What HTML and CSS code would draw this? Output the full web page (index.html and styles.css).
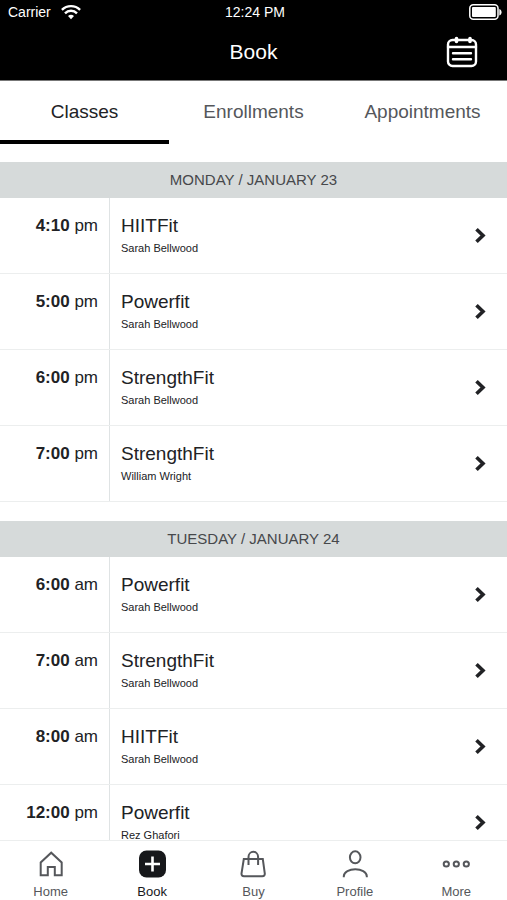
FILE: index.html
```html
<!DOCTYPE html>
<html lang="en">
<head>
<meta charset="utf-8">
<meta name="viewport" content="width=device-width, initial-scale=1">
<title>Book</title>
<link rel="stylesheet" href="styles.css">
</head>
<body>
<svg class="sprite" aria-hidden="true">
  <symbol id="chevron" viewBox="0 0 12 18"><path d="M2.500 2.200 9 8.500l-6.500 6.300" fill="none" stroke="currentColor" stroke-width="3.600"/></symbol>
</svg>

<header class="top">
  <div class="status">
    <span class="carrier">Carrier
      <svg width="20" height="16" viewBox="0 0 20 16" fill="none" stroke="currentColor" stroke-width="2.400" aria-hidden="true"><path d="M.9 5.800a13 13 0 0 1 18.200 0M4 9.300a8.500 8.500 0 0 1 12 0"/><path d="M10 15.300 7 12.100a4.300 4.300 0 0 1 6 0z" fill="currentColor" stroke="none"/></svg>
    </span>
    <span>12:24 PM</span>
    <span class="battery">
      <svg width="33" height="16" viewBox="0 0 33 16" aria-hidden="true"><rect x=".8" y=".8" width="28.200" height="14.400" rx="3.500" fill="none" stroke="currentColor" stroke-width="1.500"/><rect x="3" y="3" width="23.800" height="10" rx="1" fill="currentColor"/><path d="M30.300 5c3 .8 3 5.800 0 6.600z" fill="currentColor"/></svg>
    </span>
  </div>
  <div class="titlebar">
    <h1>Book</h1>
    <button class="calendar" type="button" aria-label="Calendar">
      <svg width="32" height="32" viewBox="0 0 32 32" fill="none" stroke="currentColor" stroke-width="2.400" stroke-linecap="round" aria-hidden="true"><rect x="2" y="4" width="28" height="26" rx="4.500"/><path d="M2 11h28M7 17.200h18M7 23.300h18"/><path d="M10.500 2.500v3M24 2.500v3" stroke-width="3.600"/></svg>
    </button>
  </div>
</header>

<nav class="tabs" aria-label="Booking types">
  <a href="#classes" class="tab active" aria-current="page">Classes</a>
  <a href="#enrollments" class="tab">Enrollments</a>
  <a href="#appointments" class="tab">Appointments</a>
</nav>

<main class="schedule" id="classes">
  <section class="day">
    <h2>MONDAY / JANUARY 23</h2>
    <a class="row" href="#c1"><span class="time"><b>4:10</b> pm</span><span class="info"><span class="name">HIITFit</span><span class="coach">Sarah Bellwood</span></span><svg class="chevron" aria-hidden="true"><use href="#chevron"/></svg></a>
    <a class="row" href="#c2"><span class="time"><b>5:00</b> pm</span><span class="info"><span class="name">Powerfit</span><span class="coach">Sarah Bellwood</span></span><svg class="chevron" aria-hidden="true"><use href="#chevron"/></svg></a>
    <a class="row" href="#c3"><span class="time"><b>6:00</b> pm</span><span class="info"><span class="name">StrengthFit</span><span class="coach">Sarah Bellwood</span></span><svg class="chevron" aria-hidden="true"><use href="#chevron"/></svg></a>
    <a class="row" href="#c4"><span class="time"><b>7:00</b> pm</span><span class="info"><span class="name">StrengthFit</span><span class="coach">William Wright</span></span><svg class="chevron" aria-hidden="true"><use href="#chevron"/></svg></a>
  </section>
  <section class="day">
    <h2>TUESDAY / JANUARY 24</h2>
    <a class="row" href="#c5"><span class="time"><b>6:00</b> am</span><span class="info"><span class="name">Powerfit</span><span class="coach">Sarah Bellwood</span></span><svg class="chevron" aria-hidden="true"><use href="#chevron"/></svg></a>
    <a class="row" href="#c6"><span class="time"><b>7:00</b> am</span><span class="info"><span class="name">StrengthFit</span><span class="coach">Sarah Bellwood</span></span><svg class="chevron" aria-hidden="true"><use href="#chevron"/></svg></a>
    <a class="row" href="#c7"><span class="time"><b>8:00</b> am</span><span class="info"><span class="name">HIITFit</span><span class="coach">Sarah Bellwood</span></span><svg class="chevron" aria-hidden="true"><use href="#chevron"/></svg></a>
    <a class="row" href="#c8"><span class="time"><b>12:00</b> pm</span><span class="info"><span class="name">Powerfit</span><span class="coach">Rez Ghafori</span></span><svg class="chevron" aria-hidden="true"><use href="#chevron"/></svg></a>
  </section>
</main>

<nav class="bottom" aria-label="Main">
  <a href="#home"><svg class="icon" viewBox="0 0 28 28" aria-hidden="true"><path d="M3.700 25.300V12.500L14.200 2.700l10.500 9.800v12.800h-6.900v-8.400h-7v8.400z"/></svg>Home</a>
  <a href="#book" class="active" aria-current="page"><svg class="icon" viewBox="0 0 28 28" aria-hidden="true"><rect x="1" y=".5" width="27" height="27" rx="7.500" fill="currentColor" stroke="none"/><path d="M14.500 6.500v15M7 14h15" stroke="#fff" stroke-width="2.600"/></svg>Book</a>
  <a href="#buy"><svg class="icon" viewBox="0 0 28 28" aria-hidden="true"><path d="M4.800 9h19l2 14.500q.2 2.700-2.500 2.700H5q-2.700 0-2.500-2.700z"/><path d="M9.500 15V7a4.800 5.200 0 0 1 9.600 0v8"/></svg>Buy</a>
  <a href="#profile"><svg class="icon" viewBox="0 0 28 28" aria-hidden="true"><ellipse cx="14.200" cy="7.300" rx="5.300" ry="6"/><path d="M2.800 27.300v-1c0-9.300 23-9.300 23 0v1"/></svg>Profile</a>
  <a href="#more"><svg class="icon" viewBox="0 0 28 28" aria-hidden="true"><circle cx="4.300" cy="14" r="2.600"/><circle cx="14.300" cy="14" r="2.600"/><circle cx="24.300" cy="14" r="2.600"/></svg>More</a>
</nav>
</body>
</html>
```
FILE: styles.css
```css
* {
  box-sizing: border-box;
}

body {
  display: flex;
  flex-direction: column;
  height: 100vh;
  margin: 0;
  background: #fff;
  color: #212225;
  font-family: "Liberation Sans", Arial, sans-serif;
}

a {
  color: inherit;
  text-decoration: none;
}

.sprite {
  display: none;
}

.top {
  background: #000;
  border-bottom: 1px solid #777;
  color: #fff;
}

.status {
  display: grid;
  grid-template-columns: 1fr auto 1fr;
  align-items: center;
  height: 24px;
  padding: 0 5px 0 8px;
  font-size: 14px;
}

.carrier {
  display: flex;
  align-items: center;
  gap: 10px;
}

.battery {
  display: flex;
  justify-content: flex-end;
}

.titlebar {
  display: grid;
  grid-template-columns: 1fr auto 1fr;
  align-items: center;
  height: 56px;
  padding: 0 29px;
}

h1 {
  grid-column: 2;
  margin: 0;
  font-size: 21px;
  font-weight: 400;
}

.calendar {
  justify-self: end;
  display: flex;
  padding: 0;
  border: 0;
  background: none;
  color: inherit;
}

.tabs {
  display: grid;
  grid-template-columns: repeat(3, 1fr);
  height: 63px;
  flex: none;
}

.tab {
  display: flex;
  align-items: center;
  justify-content: center;
  padding-top: 3px;
  border-bottom: 4px solid transparent;
  color: #55575b;
  font-size: 19px;
}

.tab.active {
  border-color: #000;
  color: #212225;
}

.schedule {
  flex: 1;
  min-height: 0;
  padding-top: 18px;
  overflow: hidden;
}

.day {
  margin-bottom: 19px;
}

h2 {
  margin: 0;
  background: #d6dada;
  color: #46484b;
  font-size: 15px;
  font-weight: 400;
  line-height: 36px;
  text-align: center;
}

.row {
  display: flex;
  height: 76px;
  border-bottom: 1px solid #eceeee;
}

.time {
  width: 110px;
  padding: 18px 11px 0 0;
  border-right: 1px solid #dfe3e4;
  font-size: 17px;
  line-height: 20px;
  text-align: right;
}

.info {
  display: flex;
  flex: 1;
  flex-direction: column;
  gap: 4px;
  padding: 18px 0 0 11px;
}

.name {
  font-size: 19px;
  line-height: 20px;
}

.coach {
  font-size: 11px;
  line-height: 16px;
}

.chevron {
  align-self: center;
  width: 12px;
  height: 18px;
  margin-right: 21px;
}

.bottom {
  display: grid;
  grid-template-columns: repeat(5, 1fr);
  flex: none;
  height: 60px;
  border-top: 1px solid #eceeee;
  background: #fff;
  color: #55575b;
  font-size: 13px;
  line-height: 16px;
}

.bottom a {
  display: flex;
  flex-direction: column;
  align-items: center;
  gap: 6px;
  padding-top: 9px;
}

.bottom .active {
  color: #17181b;
}

.icon {
  width: 28px;
  height: 28px;
  fill: none;
  stroke: currentColor;
  stroke-width: 2;
}
```
